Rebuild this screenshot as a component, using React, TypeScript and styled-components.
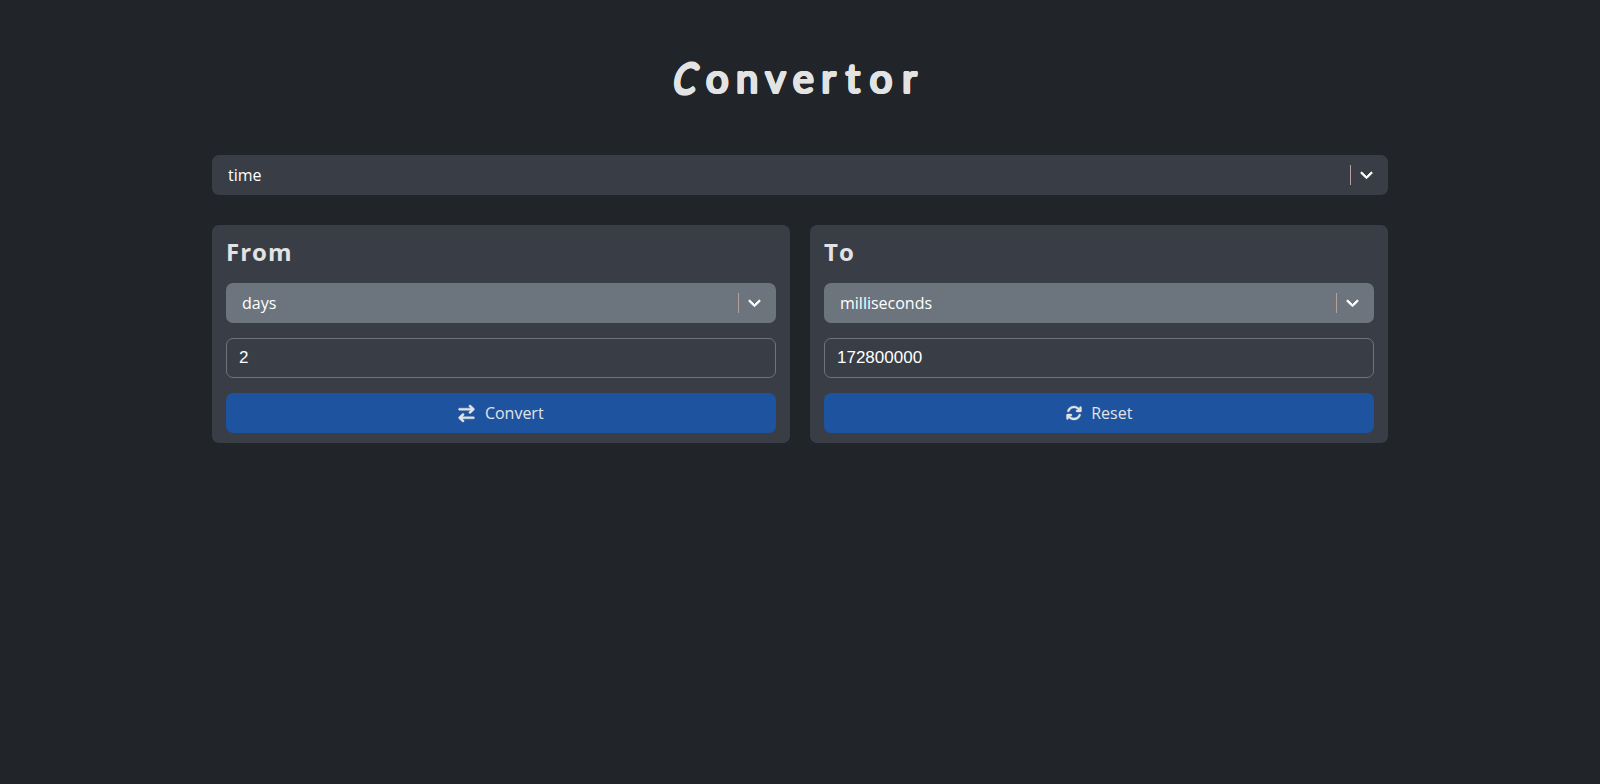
import React, { useState } from 'react';
import styled, { createGlobalStyle } from 'styled-components';
import { FaArrowRightArrowLeft, FaArrowsRotate, FaChevronDown } from 'react-icons/fa6';

const GlobalStyle = createGlobalStyle`
  *, *::before, *::after { box-sizing: border-box; }
  body {
    margin: 0;
    min-height: 100vh;
    background: #212529;
    color: #e3e3e3;
    font-family: 'Open Sans', 'Noto Sans', sans-serif;
    font-size: 16px;
    line-height: 24px;
  }
`;

const Page = styled.main`
  width: 1176px;
  margin: 0 auto;
  padding-top: 48px;
`;

const Title = styled.h1`
  display: flex;
  justify-content: center;
  margin: 0 0 47px;
  height: 60px;
  font-family: 'Comic Sans MS', Lato, sans-serif;
  font-size: 40px;
  line-height: 60px;
  font-weight: 400;
  letter-spacing: 7.4px;
  text-shadow:
    1.3px 0 #e3e3e3, -1.3px 0 #e3e3e3, 0 1.3px #e3e3e3, 0 -1.3px #e3e3e3,
    1px 1px #e3e3e3, -1px 1px #e3e3e3, 1px -1px #e3e3e3, -1px -1px #e3e3e3;
`;

const Slanted = styled.span`
  font-style: italic;
  transform: skewX(-6deg) scale(0.94, 1.05);
`;

const Loose = styled.span`
  letter-spacing: 9.8px;
`;

const Select = styled.button<{ $tone: string }>`
  display: flex;
  align-items: center;
  width: 100%;
  height: 40px;
  padding: 0 15.5px 0 16px;
  border: 0;
  border-radius: 7px;
  background: ${({ $tone }) => $tone};
  color: #fff;
  font: inherit;
  text-align: left;

  svg {
    margin-bottom: 1px;
    stroke: currentColor;
    stroke-width: 36px;
    overflow: visible;
  }
`;

const Value = styled.span`
  flex: 1;
`;

const Separator = styled.span`
  width: 1px;
  height: 20px;
  margin-right: 8.5px;
  background: #b3a19f;
`;

const Cards = styled.div`
  display: grid;
  grid-template-columns: 1fr 1fr;
  gap: 20px;
  margin-top: 30px;
`;

const Card = styled.section`
  display: flex;
  flex-direction: column;
  gap: 15px;
  height: 218px;
  padding: 10px 14px;
  border-radius: 7px;
  background: #393d45;
`;

const Heading = styled.h2`
  margin: 0;
  height: 33px;
  font-size: 24px;
  line-height: 34px;
  font-weight: 700;
  letter-spacing: 1px;
`;

const Field = styled.input`
  width: 100%;
  height: 40px;
  padding: 0 12px 1px;
  border: 1px solid #6c757d;
  border-radius: 7px;
  outline: 0;
  background: transparent;
  color: #fff;
  font-family: 'Liberation Sans', Arial, sans-serif;
  font-size: 17px;
`;

const Action = styled.button`
  display: flex;
  flex-shrink: 0;
  align-items: center;
  justify-content: center;
  gap: 9.5px;
  height: 40px;
  padding: 0;
  border: 0;
  border-radius: 7px;
  background: #1e539f;
  color: #e3e3e3;
  font: inherit;

  svg {
    stroke: currentColor;
    stroke-width: 12px;
    overflow: visible;
  }
`;

const SwapIcon = styled(FaArrowRightArrowLeft)`
  width: 17px;
  height: 17px;
  transform: scaleX(1.08);
`;

function Dropdown({ value, tone }: { value: string; tone: string }) {
  return (
    <Select $tone={tone}>
      <Value>{value}</Value>
      <Separator />
      <FaChevronDown size={13} />
    </Select>
  );
}

export default function App() {
  const [from, setFrom] = useState('2');
  const [to, setTo] = useState('172800000');
  return (
    <>
      <GlobalStyle />
      <Page>
        <Title><Slanted>C</Slanted>onve<Loose>rtor</Loose></Title>
        <Dropdown value="time" tone="#393d45" />
        <Cards>
          <Card>
            <Heading>From</Heading>
            <Dropdown value="days" tone="#6c757d" />
            <Field value={from} onChange={(e) => setFrom(e.target.value)} />
            <Action onClick={() => setTo(String(Number(from) * 86400000))}>
              <SwapIcon />
              Convert
            </Action>
          </Card>
          <Card>
            <Heading>To</Heading>
            <Dropdown value="milliseconds" tone="#6c757d" />
            <Field value={to} readOnly />
            <Action onClick={() => { setFrom(''); setTo(''); }}>
              <FaArrowsRotate size={16} />
              Reset
            </Action>
          </Card>
        </Cards>
      </Page>
    </>
  );
}
